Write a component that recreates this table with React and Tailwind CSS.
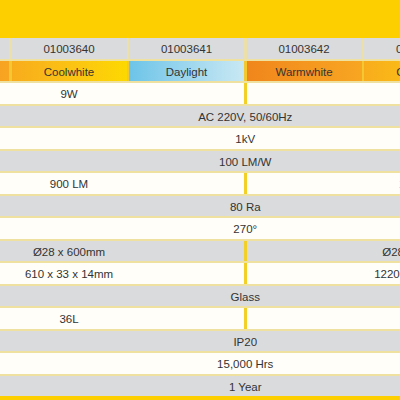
import React from "react";

const rows = [
  { bg: "white", cells: [["9W", 3], ["18W", 3]] },
  { bg: "gray", cells: [["AC 220V, 50/60Hz", 6]] },
  { bg: "white", cells: [["1kV", 6]] },
  { bg: "gray", cells: [["100 LM/W", 6]] },
  { bg: "white", cells: [["900 LM", 3], ["1800 LM", 3]] },
  { bg: "gray", cells: [["80 Ra", 6]] },
  { bg: "white", cells: [["270°", 6]] },
  { bg: "gray", cells: [["Ø28 x 600mm", 3], ["Ø28 x 1200mm", 3]] },
  { bg: "white", cells: [["610 x 33 x 14mm", 3], ["1220 x 33 x 14mm", 3]] },
  { bg: "gray", cells: [["Glass", 6]] },
  { bg: "white", cells: [["36L", 3], ["72L", 3]] },
  { bg: "gray", cells: [["IP20", 6]] },
  { bg: "white", cells: [["15,000 Hrs", 6]] },
  { bg: "gray", cells: [["1 Year", 6]] },
];

const codes = ["01003639", "01003640", "01003641", "01003642", "01003643", "01003644"];

const colours = [
  { label: "Warmwhite", cls: "bg-gradient-to-r from-[#f0861c] to-[#f8a622]" },
  { label: "Coolwhite", cls: "bg-gradient-to-r from-[#f8ac1c] to-[#fdd800]" },
  { label: "Daylight", cls: "bg-gradient-to-r from-[#6cc4e8] to-[#c8e8f3]" },
  { label: "Warmwhite", cls: "bg-gradient-to-r from-[#f0861c] to-[#f8a622]" },
  { label: "Coolwhite", cls: "bg-gradient-to-r from-[#f8ac1c] to-[#fdd800]" },
  { label: "Daylight", cls: "bg-gradient-to-r from-[#6cc4e8] to-[#c8e8f3]" },
];

function Cell({ children, span, className }) {
  const spanCls = span === 6 ? "col-span-6" : span === 3 ? "col-span-3" : "col-span-1";
  return (
    <div className={`${spanCls} flex items-center justify-center pt-[3px] whitespace-nowrap ${className}`}>
      {children}
    </div>
  );
}

export default function App() {
  return (
    <div className="w-[400px] h-[400px] overflow-hidden bg-[#fdcf00] text-[11.5px] text-[#333333] font-['Liberation_Sans',Arial,sans-serif]">
      <div className="pt-[38px] -ml-[106px] w-[701px]">
        <div className="flex flex-col gap-y-[2px] bg-[#efe2a0]">
          <div className="grid grid-cols-[repeat(6,115px)] gap-x-[2.5px] h-[20.5px] bg-[#ece0a8]">
            {codes.map(c => (
              <Cell key={c} span={1} className="bg-[#dadbdc]">{c}</Cell>
            ))}
          </div>
          <div className="grid grid-cols-[repeat(6,115px)] gap-x-[2.5px] h-[20.5px] bg-[#f3c830]">
            {colours.map((c, i) => (
              <Cell key={i} span={1} className={c.cls}>{c.label}</Cell>
            ))}
          </div>
          {rows.map((r, i) => (
            <div key={i} className="grid grid-cols-[repeat(6,115px)] gap-x-[2.5px] h-[20.5px] bg-[#f2d028]">
              {r.cells.map(([text, span], j) => (
                <Cell key={j} span={span} className={r.bg === "gray" ? "bg-[#dadbdc]" : "bg-[#fffef9]"}>
                  {text}
                </Cell>
              ))}
            </div>
          ))}
        </div>
      </div>
    </div>
  );
}
